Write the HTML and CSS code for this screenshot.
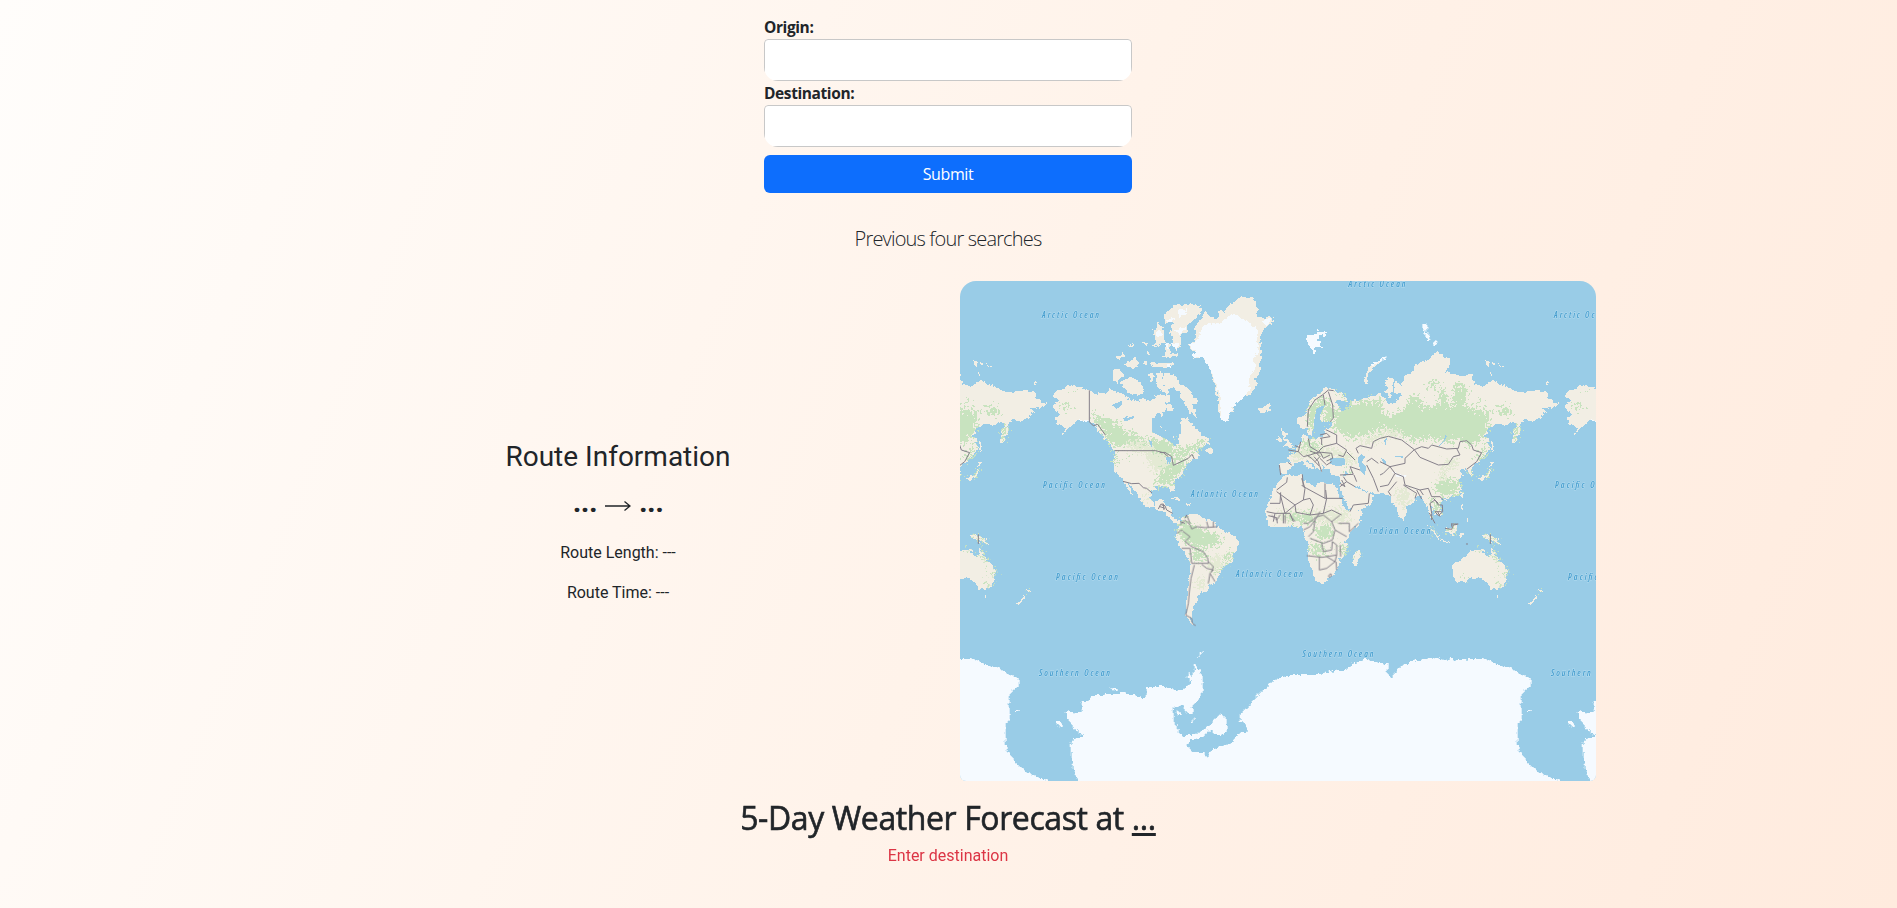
FILE: index.html
```html
<!DOCTYPE html>
<html lang="en">
<head>
<meta charset="utf-8">
<title>Route Weather</title>
<link rel="stylesheet" href="styles.css">
</head>
<body>
<form class="search">
  <label class="label" for="origin">Origin:</label>
  <div class="field"><input class="input" id="origin" type="text"></div>
  <label class="label" for="destination">Destination:</label>
  <div class="field"><input class="input" id="destination" type="text"></div>
  <button class="submit" type="button">Submit</button>
</form>
<p class="previous">Previous four searches</p>
<main class="row">
  <section class="route">
    <h3 class="route-title">Route Information</h3>
    <div class="route-ends"><b>...</b><svg class="arrow" width="26" height="12" viewBox="0 0 26 12"><path d="M0 6H25M19.500 1.500L25 6L19.500 10.500"/></svg><b>...</b></div>
    <p class="route-line">Route Length: ---</p>
    <p class="route-line">Route Time: ---</p>
  </section>
  <div class="map">
    <svg class="map-svg" width="636" height="500" viewBox="960 281 636 500">
      <defs>
        <filter id="coast" x="0" y="0" width="100%" height="100%" color-interpolation-filters="sRGB"><feTurbulence type="fractalNoise" baseFrequency=".22" numOctaves="2" seed="4"/><feDisplacementMap in="SourceGraphic" scale="6" xChannelSelector="R" yChannelSelector="G"/></filter>
        <filter id="speckle" x="0" y="0" width="100%" height="100%" color-interpolation-filters="sRGB"><feTurbulence type="fractalNoise" baseFrequency=".38" numOctaves="2" seed="9"/><feDisplacementMap in="SourceGraphic" scale="22" xChannelSelector="R" yChannelSelector="G"/></filter>
        <g id="world">
          <g class="land" filter="url(#coast)">
            <g transform="translate(950 275) scale(.33333)">
              <path d="M308 362L325 345 340 342 350 330 372 332 395 340 418 348 440 356 470 350 482 343 500 352 515 355 530 372 560 378 580 370 600 378 618 368 628 378 640 360 660 362V380L640 380 640 400 615 420 620 450 640 465 670 485V635H620L605 650 600 670 615 690 635 680 645 690 662 700 662 722 640 705 620 692 600 695 580 690 570 670 555 650 540 630 525 620 505 600 492 585 494 530 485 515 465 490 445 470 430 445 405 435 385 432 360 455 335 482 350 460 320 445 312 430 330 420 312 400 307 392 330 380Z"/>
              <path d="M519 619L526 619 550 658 544 658ZM488 285L510 285 522 300 500 324 488 315ZM510 322L540 305 560 315 585 340 570 360 540 355 525 340ZM500 250L518 234 523 240 505 254ZM522 266L545 256 552 242 568 262 560 275 540 279ZM570 195L590 203 590 213ZM612 168L625 140 640 160 645 205 620 190ZM640 120L665 105V140ZM598 298L610 295 612 320 600 315ZM618 295L634 292 640 330 660 350 650 360 620 335ZM600 262L655 264V275L605 275ZM605 205L618 208 616 225ZM645 215L660 205V250L640 245ZM576 262L590 255 588 270ZM538 212L550 206 546 222ZM588 228L600 238 592 242Z"/>
            </g>
            <g transform="translate(1160 275) scale(.33333)">
              <path d="M-30 470L0 475 35 485 40 515 52 510 55 490 65 480 60 430 85 430 95 450 110 460 125 480 145 490 150 505 125 515 105 528 120 545 90 560 75 575 65 600 50 610 40 625 45 652 35 650 30 635 -30 635ZM140 520L157 520 158 533 138 532Z"/>
              <path d="M12 295L40 297 60 325 90 345 117 385 100 390 110 425 90 415 75 390 60 360 40 340 20 350 8 320ZM10 125L40 93 90 85 125 100 118 122 85 150 85 175 60 180 65 215 45 225 40 195 30 170 40 140 15 145ZM-20 160L8 170 15 200-10 215ZM12 235L55 235 55 245 12 245ZM0 265L45 262 45 275 0 275ZM-20 360L10 358 18 385 40 395 38 412 15 400 5 425-10 400Z"/>
              <path d="M105 150L130 125 135 110 155 125 175 130 180 105 195 115 200 90 225 85 235 68 275 65 280 75 295 95 290 120 300 130 335 125 338 140 310 165 300 185 305 235 300 260 300 290 285 310 292 330 270 360 245 370 220 395 205 435 185 435 175 400 175 370 160 320 150 270 130 250 95 250 105 235 80 212 110 190Z"/>
              <path d="M292 395L312 395 325 386 334 402 314 416 298 412ZM365 460L380 475 377 490 395 508 390 517 368 517 378 502 366 485ZM350 490L362 482 365 498 350 505ZM615 328L613 305 625 280 640 265 660 250V264L636 280 625 300 625 330Z"/>
              <path d="M357 598L355 566 385 562 395 565 380 545 405 535 412 515 427 500 428 472 437 485 465 490 490 486 497 465 520 450 515 438 480 442 460 455 452 478 442 475 440 458 420 458 412 432 440 410 455 370 490 350 500 335 520 345 555 360 560 380 530 375 530 395 548 410 562 405 575 398 585 368 592 385 610 370 640 365 665 360V655L640 653 628 650 600 640 580 618 560 590 545 600 510 600 507 583 490 580 485 590 475 582 460 570 448 556 440 556 450 570 465 580 455 585 440 575 425 558 412 563 403 565 390 585 378 597Z"/>
              <path d="M540 598L580 600 580 618 597 645 628 653 640 660 635 685 610 700 575 715 568 700 552 670 538 640Z"/>
              <path d="M378 600L400 602 425 598 430 615 460 632 470 628 475 620 525 630 545 680 560 710 570 725 605 722 600 740 590 755H330L318 725 318 700 325 680 335 650 350 630 370 605ZM-10 675L12 675 15 700 30 708 35 725 62 742 50 747 10 710-15 705ZM30 670L50 667 65 677 45 675ZM80 682L92 684 90 692 80 689Z"/>
            </g>
            <g transform="translate(1160 515) scale(.33333)">
              <path d="M60 30L65 10 80 0 95-3 120 5 135 10 160 15 175 40 195 50 225 65 240 80 235 100 220 120 215 145 190 155 180 175 165 205 145 210 145 225 120 235 105 265 95 295 90 310 100 325 110 332 95 328 78 305 78 270 85 220 90 160 90 130 70 110 50 75 47 55Z"/>
              <path d="M320-12L606-12 605 5 590 25 570 55 555 80 562 95 560 115 540 130 540 150 525 170 510 190 495 203 470 203 460 175 445 135 440 115 450 95 435 65 430 45 425 30 410 18 390 22 360 25 340 15ZM580 125L600 105 602 120 588 157 578 150Z"/>
            </g>
            <g transform="translate(1380 275) scale(.33333)">
              <path d="M-20 362L0 355 20 375 35 387 50 375 65 365 60 350 40 350 45 320 65 330 75 300 100 290 105 270 140 258 165 235 170 228 185 240 210 250 212 270 190 300 205 290 230 300 275 298 285 325 300 335 330 325 335 312 350 320 380 335 410 350 445 352 460 345 495 352 510 370 520 385 537 385 520 400 490 400 495 420 460 440 430 435 425 450 405 505 397 500 400 470 415 445 395 440 380 450 340 450 315 475 308 485 328 490 325 530 300 555 272 582 282 605 268 600 260 580 240 585 245 605 235 615 248 640 240 655 215 665 190 672 180 690 188 715 170 722 160 705 152 690 158 740 148 715 145 700 130 675 120 660 105 675 80 700 70 730 60 730 50 705 40 680 25 663 0 650-20 652Z"/>
              <path d="M18 310L38 306 40 340 30 370 18 350ZM330 560L347 560 335 570ZM332 570L329 600 315 612 290 616 315 600ZM335 500L341 500 340 528 334 525ZM330 292L340 295 335 300ZM316 255L330 257 326 272 318 270ZM335 262L345 264 340 270ZM355 267L372 272 365 275ZM490 330L506 325 503 332ZM244 655L250 655 249 665 243 665ZM243 686L250 690 250 710 244 705ZM190 668L199 672 195 678ZM70 715L76 724 70 738Z"/>
            </g>
            <g transform="translate(1380 515) scale(.33333)">
              <path d="M217 150L245 132 270 110 285 105 310 103 305 115 330 127 338 97 345 120 360 140 380 160 380 185 370 222 330 222 320 205 300 190 270 190 255 200 228 205 217 175ZM350 240L359 242 355 250ZM478 222L489 228 480 236ZM444 268L465 243 472 247 450 272ZM305 60L325 62 350 70 364 89 340 82 330 75 315 72ZM140 25L155 40 180 65 175 70 155 50ZM195 40L215 35 230 25 232 45 220 60 200 52ZM180 76L208 78 207 81 182 79ZM240 52L248 58 241 68ZM262 10L266 22 262 22ZM148-6L160 16 155 18Z"/>
            </g>
          </g>
          <g class="meadow" filter="url(#speckle)">
            <g transform="translate(950 275) scale(.33333)"><path d="M530 500L590 495 640 530 660 560 640 600 600 580 590 540 540 525ZM600 640L580 675 590 685Z"/></g>
            <g transform="translate(1160 275) scale(.33333)"><path d="M0 570L30 560 30 600 0 610ZM390 535L440 510 500 520 560 530 585 550 570 570 530 550 450 545 400 555ZM600 490L660 480V500L610 510ZM350 710L560 705 575 740 360 740Z"/></g>
            <g transform="translate(1380 275) scale(.33333)"><path d="M0 465L90 460 60 485 0 485ZM190 560L235 550 240 570 200 580 200 610 175 620ZM45 650L80 640 95 660 70 700 60 690Z"/></g>
            <g transform="translate(1160 515) scale(.33333)"><path d="M150 130L180 120 190 140 165 180 150 170ZM115 190L140 200 130 220 110 225Z"/></g>
          </g>
          <g class="forest" filter="url(#speckle)">
            <g transform="translate(950 275) scale(.33333)"><path d="M425 400L445 425 495 440 520 465 580 485 600 510 570 500 530 500 520 520 490 515 465 480 435 440ZM596 488L670 500V530L620 515ZM625 610L645 570 668 570V630H610ZM495 535L505 535 503 580 495 575ZM335 385L365 390 350 405 330 395ZM350 350L385 350 370 355ZM520 540L535 540 530 550Z"/></g>
            <g transform="translate(1160 275) scale(.33333)"><path d="M-20 505L40 525 100 510 125 495 145 500 110 525 60 550 -20 530ZM30 560L90 550 60 600 35 615 0 630-10 615 25 600ZM445 400L490 360 495 385 475 410 470 440 455 470 445 455ZM500 370L520 400 515 440 495 450 490 420ZM520 410L560 392 600 380 665 375V465L620 480 570 490 525 465ZM425 500L470 495 480 520 440 530ZM530 350L552 363 540 370ZM380 720L450 715 470 740 400 745ZM560 575L580 580 570 595Z"/></g>
            <g transform="translate(1380 275) scale(.33333)"><path d="M0 405L30 425 75 400 95 360 120 365 135 400 175 390 180 340 195 340 205 395 215 410 225 330 240 320 262 340 255 390 265 400 330 405 325 450 315 485 270 515 240 490 200 505 150 490 100 500 60 470 0 455ZM145 325L180 315 165 335 145 335ZM355 400L395 395 390 420 360 420ZM280 380L300 375 295 390ZM403 458L423 455 405 500ZM305 530L325 500 320 530 300 555 285 555ZM175 625L200 610 240 625 235 655 195 665 165 655 160 635ZM150 670L180 690 180 715 165 710ZM268 590L282 600 272 605ZM333 570L325 603 312 608Z"/></g>
            <g transform="translate(1160 515) scale(.33333)"><path d="M65 10L90 25 135 50 170 55 185 80 160 95 120 100 95 90 75 80 55 60ZM100 105L130 110 140 135 105 140 95 120ZM200 110L217 110 210 140 190 150ZM165 160L185 155 165 180ZM465 45L490 30 515 30 520 65 500 75 465 65ZM450 85L480 85 485 120 455 118ZM485 95L510 110 490 120ZM540 90L560 95 555 120 542 120ZM430 0L470 5 435 30ZM590 125L600 108 598 128Z"/></g>
            <g transform="translate(1380 515) scale(.33333)"><path d="M338 97L345 120 358 135 350 138 338 120ZM290 105L308 103 300 110ZM375 160L383 170 378 190 372 180ZM240 180L258 185 250 192ZM350 195L368 210 360 220ZM310 61L330 65 350 74 357 82 340 78ZM145 30L175 65 165 60ZM200 45L230 35 225 50 210 58ZM350 241L358 248ZM478 224L486 230 480 234Z"/></g>
          </g>
          <g class="ice" filter="url(#coast)">
            <path transform="translate(1160 275) scale(.33333)" d="M130 150L190 140 215 117 265 142 295 165 295 230 280 250 285 280 265 310 270 350 245 375 220 392 203 437 183 435 180 370 155 290 135 250 95 245 108 230 85 210 115 195 120 175ZM305 140L325 128 338 132 318 155ZM440 180L470 175 475 165 485 180 470 195 490 218 465 215 462 240 450 215 443 205ZM480 175L495 168 502 175 495 185ZM55 105L85 100 75 120 55 130ZM45 165L80 155 70 170 55 180ZM30 200L55 205 50 225ZM18 132L50 128 30 145ZM634 268L655 255V262L638 275ZM598 155L610 158ZM640 155L652 155 645 160Z"/>
            <path transform="translate(950 275) scale(.33333)" d="M617 168L630 165 637 180 620 185ZM646 270L660 265V280ZM385 433L425 435 415 443ZM640 210L655 205 660 220Z"/>
            <path transform="translate(1380 275) scale(.33333)" d="M126 146L138 144 145 160 138 170 127 163ZM133 175L147 172 152 195 140 195ZM158 205L168 195 176 205 160 212ZM-5 253L20 240 22 247 2 258ZM35 590L60 605 80 605ZM0 148L6 150Z"/>
            <g transform="translate(950 515) scale(.33333)">
              <path d="M390 830L385 797 370 770 362 690 368 675 402 662 375 645 350 610 348 588 385 595 400 580 395 565 440 540 520 535 570 545 590 545 590 520 610 515 640 512 660 522 680 528 715 515 725 500 710 490 715 465 728 490 735 445 750 465 760 500 755 540 740 560 725 575 730 598 710 598 700 570 667 580 675 620 685 655 705 663 740 658 780 630 795 610 815 595 830 615 833 640 825 658 795 660 785 642 760 665 720 675 710 690 730 712 765 715 770 732 785 705 840 685 875 650 892 655 892 630 870 620 870 600 930 535 980 490 1030 480 1110 480 1165 465 1185 470 1200 450 1250 430 1265 440 1315 447 1310 475 1325 490 1350 455 1390 437 1455 427 1480 437 1500 430 1515 437 1590 430 1635 445 1680 458 1720 480 1745 495 1740 515 1715 535 1712 570 1718 605 1702 630 1705 700 1715 715 1735 745 1780 780 1830 797 1860 830Z"/>
              <path d="M320 620L328 615 339 635 330 639ZM482 517L505 525 500 530 485 524ZM1730 588L1740 588 1738 592ZM735 440L750 418 772 402 740 432ZM680 585L695 595 680 598ZM720 620L738 605 725 622ZM583 498L608 500"/>
            </g>
          </g>
          <g class="lake">
            <path transform="translate(1160 275) scale(.33333)" d="M462 440L470 400 495 390 480 420 482 440 515 445 485 458 460 470ZM508 565L512 548 530 550 553 548 556 570 530 574ZM592 548L605 538 616 545 605 560 618 575 615 600 602 590ZM-25 430L-5 430 0 455 40 485 45 510 15 490-25 470ZM18 545L35 545 30 570ZM535 380L545 382 558 403 545 410ZM484 555L487 570 494 578 488 574Z"/>
            <path transform="translate(950 275) scale(.33333)" d="M485 390L515 378 518 388 500 402ZM520 430L535 420 530 430 552 422 550 430 525 440ZM595 495L607 500 607 520ZM648 550L653 545 653 570Z"/>
            <path transform="translate(1380 275) scale(.33333)" d="M178 512L192 495 196 480 201 485 192 500ZM12 498L20 490 18 515ZM42 545L70 542 68 548ZM0 545L20 560 15 570Z"/>
          </g>
          <g class="border">
            <path transform="translate(950 275) scale(.33333)" d="M418 346V441L430 452 443 448 466 480M494 527H617L640 533 655 545M519 619L545 626 567 625 580 638 590 640 606 654M625 702L632 688 640 687 642 705M630 695L645 700"/>
            <path transform="translate(1160 275) scale(.33333)" d="M0 533L15 532 35 545 40 571 85 550 96 538 103 552M442 455L445 405 465 375 490 358 505 345 521 347M490 360L495 390M505 350L518 390 520 430 510 440M497 464L510 470 530 480 530 505 560 525 550 545 535 540M480 480L500 475 510 485 480 490M422 500L415 530 385 525M445 490L450 515 475 530 490 515 530 505M485 490L485 510M415 530L430 545 450 540 480 530 490 550 510 540M440 540L455 550 465 560 480 545 470 535M465 560L480 575 485 590M480 550L500 570 515 560M450 528L470 535 485 532 515 535 518 550 500 558M462 545L475 560 478 572M405 512L420 518M358 570L362 600M395 570L385 563M595 535L588 520 600 512 635 520 640 500 660 490M620 560L635 550 655 565M560 530L585 555M540 600L580 598 570 575 600 585M582 600L590 620M540 635L560 620 550 605M560 620L585 635M545 615L555 635 540 625M570 710L580 690 625 685 628 655M620 570L640 610 655 650M382 607L380 622 350 645M427 598L430 635 425 630M350 650L405 690 430 675 435 640 425 610M330 685H360L362 652M360 655L375 715 405 690M430 635L440 640 495 670 495 625M495 670H548M497 645L500 670 490 715M430 675L450 670 460 690 450 720M320 710L345 715 390 715 400 740M405 690L408 712 450 720 490 715 515 705 545 720M345 715L340 740M370 715L370 745M325 722L350 728 352 745M5 690L15 692 20 705 38 715M60 740L75 745M80 720L75 730"/>
            <path transform="translate(1380 275) scale(.33333)" d="M0 490L25 484 65 495 103 524 125 515 145 520 155 510 200 522 235 520 240 500 260 497 275 510 280 525 305 533 290 560 260 583M103 524L120 547 175 570 205 568 220 545 240 540 230 520M103 524L75 550 75 565 30 575 0 560M30 575L10 595 0 600M30 575L45 595 25 630 0 635M45 595L70 605 75 630 120 645 145 640 155 665 180 665 190 675M50 620L25 650 33 662M70 630L110 655 105 670M110 645L125 672M120 645L130 660M150 685L165 675 175 690 187 690 188 710 175 722 165 710 185 710M150 685L155 715 155 735M160 670L175 685M215 747H235"/>
            <path transform="translate(1160 515) scale(.33333)" d="M60 30L75 15 90 30 95 42 110 35 135 38 172 35M140 20L145 38M160 20L160 38M50 55L65 45 70 50 90 65 75 80 95 95 130 110 143 130 145 145 125 145 95 145 90 100 65 100M103 150L93 190 88 230 85 265 77 300 95 310 97 325 107 332M125 148L140 160 160 165 150 175 165 200M145 205L150 175M145 140L160 155 155 170M80 0L90 25M335 0L350 15 360 0M375 0V25M390 0L405 20M430 45L450 35 465 15 480-10M430 25L445 25 470 5 490 0 515 20 540 0M465 15L460 50 445 65M515 20L525 45 517 75 490 85 450 70M525 45L560 65M535 25H568V50L595 25M440 122L485 127 500 125 530 120 530 90 517 80 515 105 490 110 485 85M478 127L478 165 500 160 525 140 530 120M500 125L525 140M540 90L542 125M528 140L530 165M505 182L512 176 515 182 508 187Z"/>
            <path transform="translate(1380 515) scale(.33333)" d="M331 58V87M195 40L215 43 220 30 233 28M215 25V35M258 87L264 87M148-6L165 25M173-10L180 5"/>
          </g>
        </g>
      </defs>
      <rect class="sea" x="960" y="281" width="636" height="500"/>
      <use href="#world"/>
      <use href="#world" x="-512"/>
      <use href="#world" x="512"/>
      <g class="ocean">
        <text x="1348.500" y="286.500" textLength="57">Arctic Ocean</text>
        <text x="1042" y="317.500" textLength="57">Arctic Ocean</text>
        <text x="1554" y="317.500" textLength="57">Arctic Ocean</text>
        <text x="1043" y="487.500" textLength="62">Pacific Ocean</text>
        <text x="1555" y="487.500" textLength="62">Pacific Ocean</text>
        <text x="1191" y="496.500" textLength="67">Atlantic Ocean</text>
        <text x="1369.500" y="533.500" textLength="61">Indian Ocean</text>
        <text x="1056" y="579.500" textLength="62">Pacific Ocean</text>
        <text x="1568" y="579.500" textLength="62">Pacific Ocean</text>
        <text x="1236" y="577" textLength="67">Atlantic Ocean</text>
        <text x="1302.500" y="657" textLength="71">Southern Ocean</text>
        <text x="1039" y="675.500" textLength="71">Southern Ocean</text>
        <text x="1551" y="675.500" textLength="71">Southern Ocean</text>
      </g>
    </svg>
  </div>
</main>
<section class="forecast">
  <h2 class="forecast-title">5-Day Weather Forecast at <u>...</u></h2>
  <p class="hint">Enter destination</p>
</section>
</body>
</html>
```
FILE: styles.css
```css
* { box-sizing: border-box; }
html { background: #ffebde; }
body {
  margin: 0;
  height: 908px;
  padding-right: 1px;
  overflow: hidden;
  display: flex;
  flex-direction: column;
  align-items: center;
  background: linear-gradient(112deg, #fffdfb 0%, #fff3ea 52%, #ffebde 100%);
  color: #212529;
  font: 16px/24px "Open Sans", sans-serif;
}
.search { width: 368px; padding-top: 15px; display: flex; flex-direction: column; }
.label { height: 24px; font-weight: 700; font-size: 15.5px; letter-spacing: -.4px; }
.field { height: 42px; overflow: hidden; border-radius: 4px 4px 14px 14px; }
.input { display: block; width: 100%; height: 42px; border: 1px solid #c8c8c8; border-radius: 4px; background: #fff; padding: 0 12px; outline: none; }
.submit { margin-top: 8px; height: 38px; border: 0; border-radius: 6px; background: #0d6efd; color: #fff; font: 16px/24px "Open Sans", sans-serif; letter-spacing: -.4px; }
.previous { margin: 30px 0 28px; height: 30px; line-height: 31px; font-size: 20px; font-weight: 300; letter-spacing: -.83px; }
.row { width: 1320px; display: flex; align-items: center; }
.route { width: 660px; text-align: center; font-family: Roboto, sans-serif; padding-bottom: 2px; }
.route-title { margin: 0 0 8px; font-size: 28px; line-height: 34px; font-weight: 400; }
.route-ends { height: 59px; display: flex; justify-content: center; gap: 8px; font-size: 30px; line-height: 40px; letter-spacing: -.6px; }
.arrow { margin-top: 18px; fill: none; stroke: #212529; stroke-width: 1.3; }
.route-line { margin: 0 0 16px; font-weight: 400; }
.map { width: 636px; height: 500px; margin-left: 12px; border-radius: 16px 16px 6px 6px; overflow: hidden; }
.map-svg { display: block; shape-rendering: crispEdges; }
.sea { fill: #99cce7; }
.land { fill: #f2eee4; }
.forest { fill: #c8e3bf; }
.meadow { fill: #e4ead4; }
.ice { fill: #f5faff; }
.lake { fill: #99cce7; }
.border { fill: none; stroke: #85808a; stroke-width: 3; shape-rendering: auto; }
.ocean { font: italic 600 8.5px "Open Sans", sans-serif; font-stretch: 75%; fill: #459dce; stroke: #b5dcf0; stroke-width: 1px; paint-order: stroke; }
.forecast { text-align: center; padding-top: 17px; }
.forecast-title { margin: 0 0 7px; font-size: 32px; line-height: 39px; font-weight: 500; letter-spacing: -.4px; -webkit-text-stroke: .6px #212529; }
.forecast-title u { text-decoration-thickness: 3px; text-underline-offset: 3px; text-decoration-skip-ink: none; }
.hint { margin: 0; color: #dc3545; font-family: Roboto, sans-serif; }
```
